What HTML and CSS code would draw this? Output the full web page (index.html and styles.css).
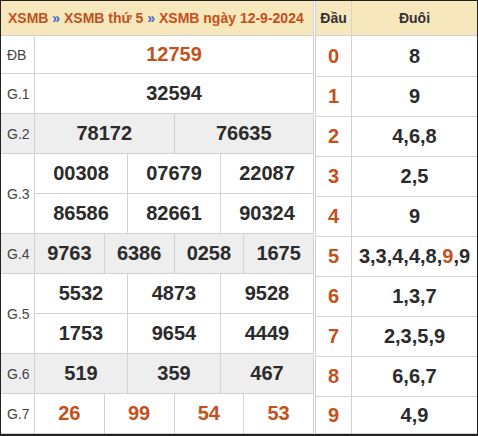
FILE: index.html
```html
<!DOCTYPE html>
<html lang="vi">
<head>
<meta charset="utf-8">
<title>XSMB 12-9-2024</title>
<link rel="stylesheet" href="styles.css">
</head>
<body>
<div class="frame">
  <div class="results">
    <div class="head">
      <span class="trail"><span class="crumb">XSMB</span> <span class="sep">»</span> <span class="crumb">XSMB thứ 5</span> <span class="sep">»</span> <span class="crumb">XSMB ngày 12-9-2024</span></span>
    </div>
    <div class="row row-db">
      <div class="lbl">ĐB</div>
      <div class="cells"><div class="cell hot">12759</div></div>
    </div>
    <div class="row">
      <div class="lbl">G.1</div>
      <div class="cells"><div class="cell">32594</div></div>
    </div>
    <div class="row grey">
      <div class="lbl">G.2</div>
      <div class="cells"><div class="cell">78172</div><div class="cell">76635</div></div>
    </div>
    <div class="group">
      <div class="lbl">G.3</div>
      <div class="subrows">
        <div class="cells sub"><div class="cell">00308</div><div class="cell">07679</div><div class="cell">22087</div></div>
        <div class="cells sub"><div class="cell">86586</div><div class="cell">82661</div><div class="cell">90324</div></div>
      </div>
    </div>
    <div class="row grey">
      <div class="lbl">G.4</div>
      <div class="cells"><div class="cell">9763</div><div class="cell">6386</div><div class="cell">0258</div><div class="cell">1675</div></div>
    </div>
    <div class="group">
      <div class="lbl">G.5</div>
      <div class="subrows">
        <div class="cells sub"><div class="cell">5532</div><div class="cell">4873</div><div class="cell">9528</div></div>
        <div class="cells sub"><div class="cell">1753</div><div class="cell">9654</div><div class="cell">4449</div></div>
      </div>
    </div>
    <div class="row grey">
      <div class="lbl">G.6</div>
      <div class="cells"><div class="cell">519</div><div class="cell">359</div><div class="cell">467</div></div>
    </div>
    <div class="row">
      <div class="lbl">G.7</div>
      <div class="cells"><div class="cell hot">26</div><div class="cell hot">99</div><div class="cell hot">54</div><div class="cell hot">53</div></div>
    </div>
  </div>
  <div class="loto">
    <div class="lrow lhead"><div class="dau">Đầu</div><div class="duoi">Đuôi</div></div>
    <div class="lrow first"><div class="dau">0</div><div class="duoi">8</div></div>
    <div class="lrow"><div class="dau">1</div><div class="duoi">9</div></div>
    <div class="lrow"><div class="dau">2</div><div class="duoi">4,6,8</div></div>
    <div class="lrow"><div class="dau">3</div><div class="duoi">2,5</div></div>
    <div class="lrow"><div class="dau">4</div><div class="duoi">9</div></div>
    <div class="lrow"><div class="dau">5</div><div class="duoi"><span>3,3,4,4,8,<span class="hot">9</span>,9</span></div></div>
    <div class="lrow"><div class="dau">6</div><div class="duoi">1,3,7</div></div>
    <div class="lrow"><div class="dau">7</div><div class="duoi">2,3,5,9</div></div>
    <div class="lrow"><div class="dau">8</div><div class="duoi">6,6,7</div></div>
    <div class="lrow last"><div class="dau">9</div><div class="duoi">4,9</div></div>
  </div>
</div>
</body>
</html>
```

FILE: styles.css
```css
* { box-sizing: border-box; }

html, body {
  margin: 0;
  padding: 0;
  background: #ffffff;
}

body {
  font-family: "Liberation Sans", Arial, sans-serif;
  color: #333333;
}

.frame {
  width: 478px;
  height: 436px;
  border: 1px solid #222222;
  border-bottom-width: 2px;
  display: flex;
  gap: 1px;
}

.results {
  width: 313px;
  border-right: 1px solid #d2d2d2;
  display: flex;
  flex-direction: column;
}

.head {
  height: 35px;
  background: #f6e7bd;
  border-bottom: 1px solid #d2d2d2;
  padding-left: 7px;
  display: flex;
  align-items: center;
  font-size: 14px;
  font-weight: bold;
}

.trail { white-space: nowrap; }

.crumb { color: #c4511b; }
.sep { color: #3a6cc5; }

.row, .group {
  display: flex;
  height: 40px;
  border-bottom: 1px solid #d2d2d2;
}

.row-db { height: 38px; }

.group { height: 80px; }

.grey { background: #eeeeee; }

.lbl {
  width: 34px;
  flex: none;
  border-right: 1px solid #d2d2d2;
  display: flex;
  align-items: center;
  padding-left: 6px;
  font-size: 14px;
  color: #444444;
}

.cells {
  flex: 1;
  display: flex;
}

.subrows {
  flex: 1;
  display: flex;
  flex-direction: column;
}

.sub { height: 40px; flex: none; }
.sub:first-child { border-bottom: 1px solid #d2d2d2; height: 40px; }
.sub:last-child { height: 39px; }

.cell {
  flex: 1 1 0;
  border-left: 1px solid #d2d2d2;
  display: flex;
  align-items: center;
  justify-content: center;
  font-size: 20px;
  font-weight: bold;
  color: #2b2b2b;
}

.cell:first-child { border-left: none; }

.hot, .cell.hot { color: #c4511b; }

.loto {
  flex: 1;
  border-left: 1px solid #d2d2d2;
  display: flex;
  flex-direction: column;
}

.lrow {
  display: flex;
  height: 40px;
  border-bottom: 1px solid #d2d2d2;
}

.lrow.first { height: 41px; }
.lrow.last { flex: 1; height: auto; }

.lhead {
  height: 35px;
  background: #f6e7bd;
  font-size: 14px;
}

.dau {
  width: 36px;
  flex: none;
  border-right: 1px solid #d2d2d2;
  display: flex;
  align-items: center;
  justify-content: center;
  font-size: 20px;
  font-weight: bold;
  color: #c4511b;
}

.duoi {
  flex: 1;
  display: flex;
  align-items: center;
  justify-content: center;
  font-size: 20px;
  font-weight: bold;
  color: #2b2b2b;
}

.lhead .dau, .lhead .duoi {
  font-size: 14px;
  color: #333333;
}
```
